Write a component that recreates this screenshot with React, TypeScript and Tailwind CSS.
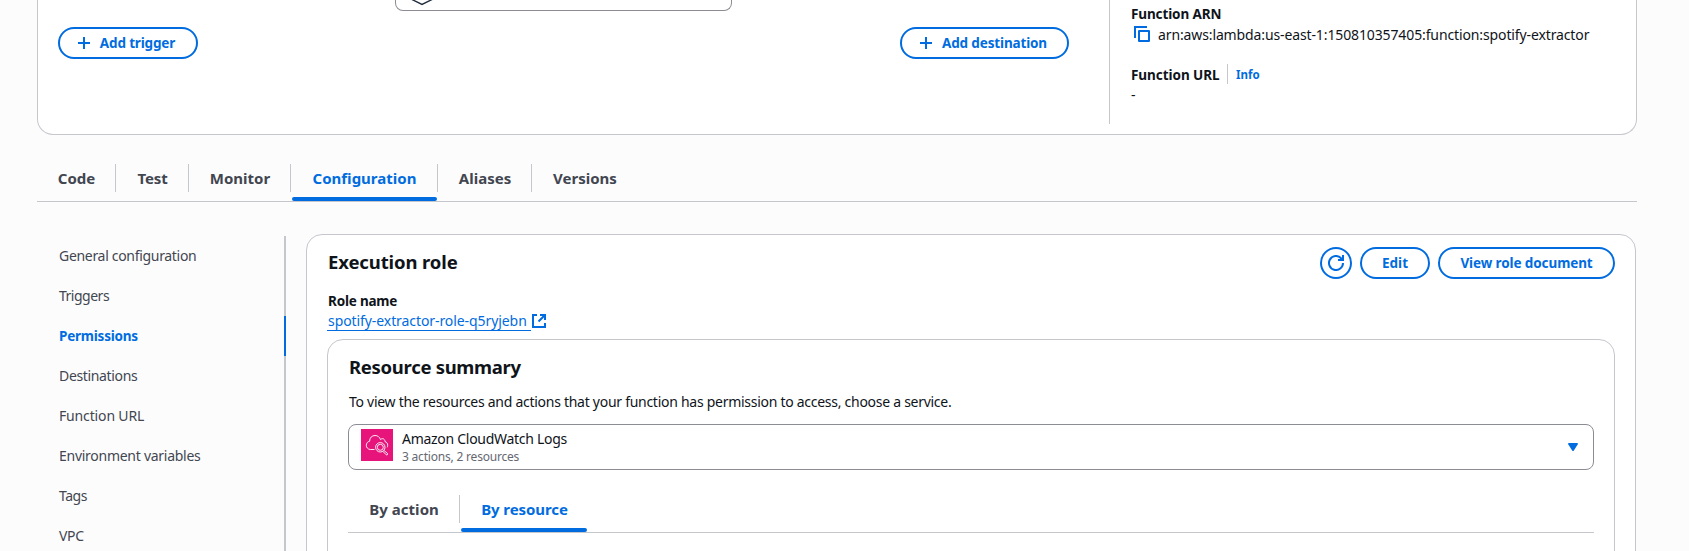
import type { ReactNode } from 'react';
import clsx from 'clsx';

type TabItem = { label: string; width: string; tracking: string; active?: boolean };

const mainTabs: TabItem[] = [
  { label: 'Code', width: 'w-[79px]', tracking: 'tracking-normal' },
  { label: 'Test', width: 'w-[73px]', tracking: 'tracking-[-0.1px]' },
  { label: 'Monitor', width: 'w-[102px]', tracking: 'tracking-normal' },
  { label: 'Configuration', width: 'w-[147px]', tracking: 'tracking-normal', active: true },
  { label: 'Aliases', width: 'w-[94px]', tracking: 'tracking-normal' },
  { label: 'Versions', width: 'w-[105px]', tracking: 'tracking-normal' },
];

const resourceTabs: TabItem[] = [
  { label: 'By action', width: 'w-[112px]', tracking: 'tracking-[0.05px]' },
  { label: 'By resource', width: 'w-[128px]', tracking: 'tracking-[-0.08px]', active: true },
];

const sideItems = [
  { label: 'General configuration', tracking: 'tracking-[-0.31px]' },
  { label: 'Triggers', tracking: 'tracking-[-0.5px]' },
  { label: 'Permissions', tracking: 'tracking-[-0.22px]', active: true },
  { label: 'Destinations', tracking: 'tracking-[-0.34px]' },
  { label: 'Function URL', tracking: 'tracking-[-0.15px]' },
  { label: 'Environment variables', tracking: 'tracking-[-0.27px]' },
  { label: 'Tags', tracking: 'tracking-[-0.45px]' },
  { label: 'VPC', tracking: 'tracking-[-0.3px]' },
];

function Tabs({ items }: { items: TabItem[] }) {
  return (
    <div className="flex h-[38px] border-b border-[#c6c6cd]">
      {items.map((tab, i) => (
        <div
          key={tab.label}
          className={clsx(
            'relative h-[37px] shrink-0 text-center text-[15px] leading-7 font-bold',
            tab.width,
            tab.active ? 'text-[#006ce0]' : 'text-[#424650]',
          )}
        >
          <div className={clsx('h-7 pl-px', tab.tracking, i < items.length - 1 && 'border-r border-[#c6c6cd]')}>
            {tab.label}
          </div>
          {tab.active && <div className="absolute inset-x-px bottom-0 h-1 rounded-[2px] bg-[#006ce0]" />}
        </div>
      ))}
    </div>
  );
}

function Button({ className, children }: { className?: string; children: ReactNode }) {
  return (
    <button
      className={clsx(
        'flex h-8 shrink-0 items-center justify-center rounded-full border-2 border-[#006ce0] bg-white text-[13.5px] leading-5 font-bold whitespace-nowrap text-[#006ce0]',
        className,
      )}
    >
      {children}
    </button>
  );
}

function PlusIcon() {
  return (
    <svg className="h-4 w-4 shrink-0" viewBox="0 0 16 16" fill="none" stroke="currentColor" strokeWidth="2">
      <path d="M8 2v12M2 8h12" />
    </svg>
  );
}

function CopyIcon() {
  return (
    <svg className="h-4 w-4 shrink-0 text-[#006ce0]" viewBox="0 0 16 16" fill="none" stroke="currentColor" strokeWidth="2">
      <path d="M1 12V1h12" />
      <path d="M5 5h10v10H5z" strokeLinejoin="round" />
    </svg>
  );
}

function RefreshIcon() {
  return (
    <svg className="h-4 w-4 shrink-0" viewBox="0 0 16 16" fill="none" stroke="currentColor" strokeWidth="2">
      <path d="M15 8a7 7 0 1 1-1.9-4.8L15 5" />
      <path d="M15 0v5h-5" />
    </svg>
  );
}

function ExternalIcon() {
  return (
    <svg className="h-[14px] w-[14px] shrink-0" viewBox="0 0 14 14" fill="none" stroke="currentColor" strokeWidth="2">
      <path d="M5 1H1v12h12V9" />
      <path d="M8 1h5v5M13 1 6.5 7.5" />
    </svg>
  );
}

function CloudWatchIcon() {
  return (
    <svg className="h-8 w-8 shrink-0" viewBox="0 0 32 32" fill="none" stroke="white" strokeWidth="0.9">
      <rect width="32" height="32" fill="#e7157b" stroke="none" />
      <path d="M13.5 20.5H9.3C6.8 20.2 5.3 18.6 5.3 16.3c0-2.2 1.5-3.7 3.3-4.1C8.5 8.8 11 6.500 14 6.500c2.700 0 4.700 1.500 5.500 4.100.700-.700 1.500-1 2.300-.900 1.400.200 2.100 1.300 2.200 2.900 1.600.500 2.700 1.700 2.700 3.700 0 .800-.200 1.500-.500 2" />
      <circle cx="19.3" cy="18.3" r="4.7" />
      <circle cx="19.3" cy="18.3" r="3" />
      <path d="m22.800 21.400 3.600 2.900c.900.900-.400 2.200-1.300 1.400L21.700 22.200" />
    </svg>
  );
}

export default function App() {
  return (
    <div className="h-[551px] w-[1689px] overflow-hidden bg-[#fcfcfd] pr-[52px] pl-[37px] font-['Noto_Sans',sans-serif] text-sm leading-5 text-[#0f141a]">
      <section className="flex h-[135px] rounded-b-2xl border border-t-0 border-[#c6c6cd] bg-white">
        <div className="w-[1071px] shrink-0 pr-10 pl-5">
          <div className="ml-[337px] h-[11px] w-[337px] rounded-b-lg border border-t-0 border-[#8c8c94] pl-[13px]">
            <svg className="h-[6px] w-7" viewBox="0 0 28 6" fill="none" stroke="#232f3e" strokeWidth="1.4">
              <path d="M1 -1.5 13 4.5 25 -1.5" />
            </svg>
          </div>
          <div className="mt-4 flex justify-between">
            <Button className="w-[140px] gap-2 pr-[5px] tracking-[-0.15px]">
              <PlusIcon />
              Add trigger
            </Button>
            <Button className="w-[169px] gap-2 pr-1 tracking-[-0.15px]">
              <PlusIcon />
              Add destination
            </Button>
          </div>
        </div>
        <div className="h-[124px] border-l border-[#c6c6cd] pt-1 pl-[21px]">
          <div className="h-5 text-[13.5px] font-bold tracking-[-0.12px]">Function ARN</div>
          <div className="flex h-5 items-center gap-2 pl-[3px]">
            <CopyIcon />
            <span className="h-5 leading-[22px] tracking-[-0.12px] whitespace-nowrap">
              arn:aws:lambda:us-east-1:150810357405:function:spotify-extractor
            </span>
          </div>
          <div className="mt-5 flex h-5">
            <span className="w-24 text-[13.5px] leading-[22px] font-bold tracking-[-0.05px]">Function URL</span>
            <span className="h-5 border-l border-[#c6c6cd] pl-2 text-[11.5px] leading-[22px] font-bold text-[#006ce0]">
              Info
            </span>
          </div>
          <div className="leading-[22px]">-</div>
        </div>
      </section>

      <nav className="mt-[29px]">
        <Tabs items={mainTabs} />
      </nav>

      <div className="flex pt-8">
        <aside className="mt-[2px] w-[249px] shrink-0">
          {sideItems.map((item) => (
            <div
              key={item.label}
              className={clsx(
                'h-10 border-r-2 pl-[22px] leading-10',
                item.tracking,
                item.active
                  ? 'border-[#006ce0] text-[13.5px] font-bold text-[#006ce0]'
                  : 'border-[#c6c6cd] text-[#424650]',
              )}
            >
              {item.label}
            </div>
          ))}
        </aside>

        <main className="ml-5 h-[400px] w-[1330px] rounded-2xl border border-[#c6c6cd] bg-white px-5 pt-3">
          <div className="flex gap-2">
            <h2 className="grow pt-px pl-px text-[18.5px] leading-7 font-bold tracking-[-0.12px]">Execution role</h2>
            <Button className="w-8">
              <RefreshIcon />
            </Button>
            <Button className="w-[70px]">Edit</Button>
            <Button className="w-[177px] tracking-[-0.1px]">View role document</Button>
          </div>
          <div className="mt-3 pl-px text-[13.5px] font-bold tracking-[-0.2px]">Role name</div>
          <div className="flex h-5 text-[#006ce0]">
            <span className="h-5 w-[204px] border-b border-[#006ce0] pl-px tracking-[-0.08px] whitespace-nowrap">
              spotify-extractor-role-q5ryjebn
            </span>
            <span className="pt-[3px] pl-px">
              <ExternalIcon />
            </span>
          </div>

          <section className="mt-2 h-[300px] rounded-2xl border border-[#c6c6cd] px-5 pt-[13px]">
            <h3 className="pl-px text-[18.5px] leading-7 font-bold tracking-[-0.3px]">Resource summary</h3>
            <p className="mt-[11px] pl-px tracking-[-0.275px]">
              To view the resources and actions that your function has permission to access, choose a service.
            </p>
            <div className="mt-3 flex h-[46px] rounded-lg border border-[#8c8c94] bg-white pt-1 pr-[15px] pl-3">
              <CloudWatchIcon />
              <div className="grow pl-[9px]">
                <div className="tracking-[-0.28px]">Amazon CloudWatch Logs</div>
                <div className="text-xs leading-4 tracking-[-0.2px] text-[#656871]">3 actions, 2 resources</div>
              </div>
              <svg className="mt-[14px] h-2 w-[10px] text-[#006ce0]" viewBox="0 0 10 8" fill="currentColor">
                <path d="M.5 0h9L10 1 5.5 8h-1L0 1z" />
              </svg>
            </div>
            <div className="mt-[25px]">
              <Tabs items={resourceTabs} />
            </div>
          </section>
        </main>
      </div>
    </div>
  );
}
